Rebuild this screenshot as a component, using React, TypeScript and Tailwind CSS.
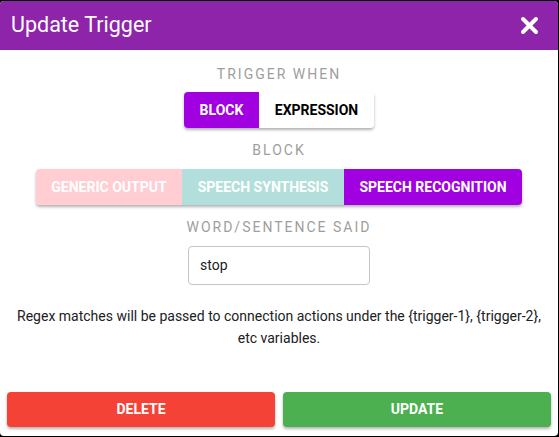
import React from "react";

export default function App() {
  return (
    <div className="w-[559px] h-[437px] bg-black pt-px" style={{ fontFamily: "Roboto, 'Liberation Sans', sans-serif" }}>
      <div className="w-[558px] h-[435px] bg-white rounded-[4px] overflow-hidden flex flex-col">
        <div className="h-[49px] bg-[#8e24aa] flex items-center justify-between pl-[11px] pr-[19px] shrink-0">
          <span className="text-white text-[21.5px]">Update Trigger</span>
          <svg width="19" height="19" viewBox="0 0 19 19">
            <path d="M3 3 L16 16 M16 3 L3 16" stroke="white" strokeWidth="4" strokeLinecap="round" />
          </svg>
        </div>
        <div className="flex flex-col items-center">
          <div className="mt-[16px] text-[14px] tracking-[2px] text-[#9e9e9e] leading-[16px]">TRIGGER WHEN</div>
          <div className="mt-[10px] flex rounded-[4px] shadow-[0_2px_3px_rgba(0,0,0,0.3)] overflow-hidden h-[36px]">
            <div className="w-[75px] bg-[#a100e0] text-white font-bold text-[14px] flex items-center justify-center">BLOCK</div>
            <div className="w-[115px] bg-white text-black font-bold text-[14px] flex items-center justify-center">EXPRESSION</div>
          </div>
          <div className="mt-[14px] text-[14px] tracking-[2px] text-[#9e9e9e] leading-[16px]">BLOCK</div>
          <div className="mt-[11px] flex rounded-[4px] shadow-[0_2px_3px_rgba(0,0,0,0.3)] overflow-hidden h-[36px]">
            <div className="w-[146px] bg-[#ffcdd2] text-white font-bold text-[14px] flex items-center justify-center">GENERIC OUTPUT</div>
            <div className="w-[162px] bg-[#b2dfdb] text-white font-bold text-[14px] flex items-center justify-center">SPEECH SYNTHESIS</div>
            <div className="w-[178px] bg-[#a100e0] text-white font-bold text-[14px] flex items-center justify-center">SPEECH RECOGNITION</div>
          </div>
          <div className="mt-[14px] text-[14px] tracking-[2px] text-[#9e9e9e] leading-[16px]">WORD/SENTENCE SAID</div>
          <div className="mt-[11px] w-[182px] h-[39px] border border-[#c4c4c4] rounded-[4px] flex items-center px-[11px] text-[14px] text-[#212121]">stop</div>
          <p className="mt-[20px] text-[14px] leading-[22px] text-[#212121] text-center px-[14px]">
            Regex matches will be passed to connection actions under the {"{trigger-1}"}, {"{trigger-2}"},<br />etc variables.
          </p>
        </div>
        <div className="mt-auto flex gap-[8px] px-[7px] pb-[9px]">
          <div className="flex-1 h-[35px] bg-[#f44336] text-white font-bold text-[14px] rounded-[4px] shadow-[0_2px_3px_rgba(0,0,0,0.3)] flex items-center justify-center">DELETE</div>
          <div className="flex-1 h-[35px] bg-[#4caf50] text-white font-bold text-[14px] rounded-[4px] shadow-[0_2px_3px_rgba(0,0,0,0.3)] flex items-center justify-center">UPDATE</div>
        </div>
      </div>
    </div>
  );
}
